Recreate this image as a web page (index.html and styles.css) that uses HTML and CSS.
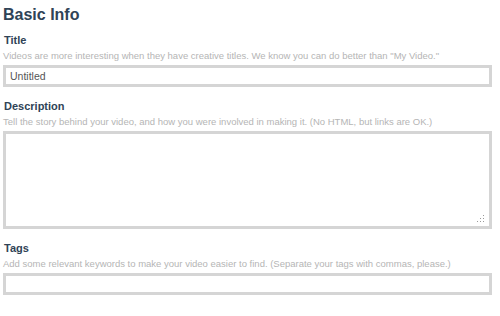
FILE: index.html
```html
<!DOCTYPE html>
<html lang="en">
<head>
  <meta charset="UTF-8" />
  <title>Basic Info</title>
  <link rel="stylesheet" href="styles.css">
</head>
<body>
  <form class="info-form">
    <h1 class="info-heading">Basic Info</h1>

    <div class="info-field">
      <label class="info-label" for="title">Title</label>
      <p class="info-hint">Videos are more interesting when they have creative titles. We know you can do better than "My Video."</p>
      <input id="title" class="info-input" type="text" value="Untitled">
    </div>

    <div class="info-field">
      <label class="info-label" for="description">Description</label>
      <p class="info-hint">Tell the story behind your video, and how you were involved in making it. (No HTML, but links are OK.)</p>
      <div class="info-area-wrap">
        <textarea id="description" class="info-input info-area"></textarea>
        <svg class="info-grip" width="9" height="9" viewBox="0 0 9 9">
          <rect x="7" y="1" width="1" height="1" />
          <rect x="4" y="4" width="1" height="1" />
          <rect x="7" y="4" width="1" height="1" />
          <rect x="1" y="7" width="1" height="1" />
          <rect x="4" y="7" width="1" height="1" />
          <rect x="7" y="7" width="1" height="1" />
        </svg>
      </div>
    </div>

    <div class="info-field info-field-last">
      <label class="info-label" for="tags">Tags</label>
      <p class="info-hint">Add some relevant keywords to make your video easier to find. (Separate your tags with commas, please.)</p>
      <input id="tags" class="info-input" type="text" value="">
    </div>
  </form>
</body>
</html>
```

FILE: styles.css
```css
:root {
  --heading-color: #2f4356;
  --hint-color: #b5b5b5;
  --input-text: #555555;
  --input-border: #d5d5d5;
}

* {
  margin: 0;
  padding: 0;
  box-sizing: border-box;
}

body {
  font-family: 'Liberation Sans', Arial, sans-serif;
  background: #ffffff;
  color: var(--heading-color);
}

.info-form {
  display: flex;
  flex-direction: column;
  padding: 5px 8px 0 3px;
}

.info-heading {
  font-size: 16px;
  line-height: 20px;
  font-weight: 700;
  color: var(--heading-color);
  margin-bottom: 9px;
}

.info-field {
  display: flex;
  flex-direction: column;
  margin-bottom: 13px;
}

.info-label {
  font-size: 11px;
  line-height: 13px;
  font-weight: 700;
  color: var(--heading-color);
  padding-left: 1px;
}

.info-hint {
  font-size: 9.5px;
  line-height: 12px;
  color: var(--hint-color);
  margin: 3px 0 3px;
  white-space: nowrap;
}

.info-input {
  display: block;
  width: 100%;
  height: 22px;
  border: 3px solid var(--input-border);
  padding: 0 4px;
  font-family: 'Liberation Sans', Arial, sans-serif;
  font-size: 10.5px;
  color: var(--input-text);
  background: #ffffff;
  outline: none;
}

.info-area-wrap {
  position: relative;
}

.info-area {
  height: 98px;
  resize: none;
  padding: 4px;
}

/* resize grip dots */
.info-grip {
  position: absolute;
  right: 7px;
  bottom: 6px;
  fill: #9a9a9a;
}
```
